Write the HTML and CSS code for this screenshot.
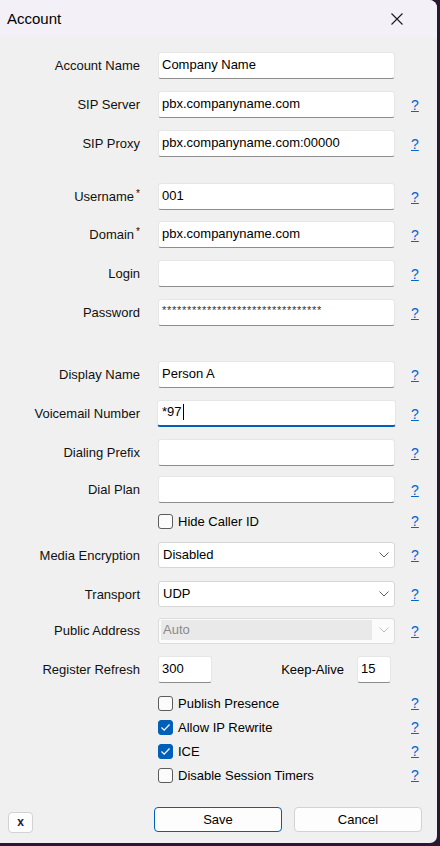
FILE: index.html
```html
<!DOCTYPE html>
<html>
<head>
<meta charset="utf-8">
<link rel="stylesheet" href="styles.css">
</head>
<body>
<div class="window">
  <div class="titlebar">
    <span class="title">Account</span>
    <svg class="close" width="12" height="12" viewBox="0 0 12 12"><path d="M0.5 0.5L11.5 11.5M11.5 0.5L0.5 11.5" stroke="#1a1a1a" stroke-width="1.1" fill="none"/></svg>
  </div>
  <div class="form">
    <div class="row first"><span class="label">Account Name</span><div class="input">Company Name</div><span></span></div>
    <div class="row"><span class="label">SIP Server</span><div class="input">pbx.companyname.com</div><a class="help">?</a></div>
    <div class="row"><span class="label">SIP Proxy</span><div class="input">pbx.companyname.com:00000</div><a class="help">?</a></div>

    <div class="row sec1"><span class="label">Username<sup>*</sup></span><div class="input">001</div><a class="help">?</a></div>
    <div class="row tight"><span class="label">Domain<sup>*</sup></span><div class="input">pbx.companyname.com</div><a class="help">?</a></div>
    <div class="row"><span class="label">Login</span><div class="input"></div><a class="help">?</a></div>
    <div class="row"><span class="label">Password</span><div class="input pw">********************************</div><a class="help">?</a></div>

    <div class="row sec2"><span class="label">Display Name</span><div class="input">Person A</div><a class="help">?</a></div>
    <div class="row"><span class="label">Voicemail Number</span><div class="input focused">*97<span class="caret"></span></div><a class="help">?</a></div>
    <div class="row"><span class="label">Dialing Prefix</span><div class="input"></div><a class="help">?</a></div>
    <div class="row tight2"><span class="label">Dial Plan</span><div class="input"></div><a class="help">?</a></div>

    <div class="row check cb-first"><span></span><label class="cb"><span class="box"></span>Hide Caller ID</label><a class="help">?</a></div>

    <div class="row sel-first"><span class="label">Media Encryption</span><div class="select"><span>Disabled</span><svg class="chev" width="10" height="6" viewBox="0 0 10 6"><path d="M0.5 0.5L5 5L9.5 0.5" stroke="#606060" stroke-width="1" fill="none"/></svg></div><a class="help">?</a></div>
    <div class="row"><span class="label">Transport</span><div class="select"><span>UDP</span><svg class="chev" width="10" height="6" viewBox="0 0 10 6"><path d="M0.5 0.5L5 5L9.5 0.5" stroke="#606060" stroke-width="1" fill="none"/></svg></div><a class="help">?</a></div>
    <div class="row tight2"><span class="label">Public Address</span><div class="select disabled"><span class="dis-inner">Auto</span><svg class="chev" width="10" height="6" viewBox="0 0 10 6"><path d="M0.5 0.5L5 5L9.5 0.5" stroke="#c0c0c0" stroke-width="1" fill="none"/></svg></div><a class="help">?</a></div>

    <div class="row"><span class="label">Register Refresh</span>
      <div class="pair">
        <div class="input small">300</div>
        <span class="ka-label">Keep-Alive</span>
        <div class="input tiny">15</div>
      </div><span></span></div>

    <div class="row check cb-after"><span></span><label class="cb"><span class="box"></span>Publish Presence</label><a class="help">?</a></div>
    <div class="row check"><span></span><label class="cb"><span class="box checked"><svg width="11" height="9" viewBox="0 0 11 9"><path d="M1.5 4.5L4.2 7.2L9.5 1.5" stroke="#fff" stroke-width="1.2" fill="none"/></svg></span>Allow IP Rewrite</label><a class="help">?</a></div>
    <div class="row check"><span></span><label class="cb"><span class="box checked"><svg width="11" height="9" viewBox="0 0 11 9"><path d="M1.5 4.5L4.2 7.2L9.5 1.5" stroke="#fff" stroke-width="1.2" fill="none"/></svg></span>ICE</label><a class="help">?</a></div>
    <div class="row check"><span></span><label class="cb"><span class="box"></span>Disable Session Timers</label><a class="help">?</a></div>
  </div>
  <div class="footer">
    <button class="xbtn">x</button>
    <button class="btn primary">Save</button>
    <button class="btn">Cancel</button>
  </div>
</div>
</body>
</html>
```

FILE: styles.css
```css
html, body {
  margin: 0;
  padding: 0;
}
body {
  background: #2a1830;
  font-family: "Liberation Sans", Arial, sans-serif;
  font-size: 13px;
  color: #000;
  width: 440px;
  height: 846px;
  overflow: hidden;
}
.window {
  width: 437px;
  height: 843px;
  background: #f0f0f0;
  border-radius: 0 8px 7px 0;
  overflow: hidden;
  display: flex;
  flex-direction: column;
}
.titlebar {
  height: 37px;
  flex: none;
  background: #f3f1f7;
  display: flex;
  align-items: center;
  justify-content: space-between;
  padding: 0 34px 0 7px;
}
.title {
  font-size: 15px;
  color: #000;
  margin-top: -1px;
}
.close {
  display: block;
}
.form {
  padding-top: 15px;
}
.row {
  display: grid;
  grid-template-columns: 142px 237px 1fr;
  column-gap: 16px;
  align-items: center;
  height: 27px;
  margin-top: 12px;
}
.row.first { margin-top: 0; }
.row.sec1 { margin-top: 26px; }
.row.tight { margin-top: 11px; }
.row.sec2 { margin-top: 35px; }
.row.tight2 { margin-top: 10px; }
.label {
  text-align: right;
  padding-right: 2px;
  white-space: nowrap;
  color: #111;
}
.label sup {
  font-size: 10px;
  vertical-align: 0;
  position: relative;
  top: -4px;
  margin-left: 2px;
}
.help {
  color: #0066cc;
  text-decoration: underline;
  font-size: 14px;
  line-height: 16px;
  cursor: pointer;
}
.input {
  box-sizing: border-box;
  height: 27px;
  background: #fff;
  border: 1px solid #e6e6e6;
  border-bottom: 1px solid #8d8d8d;
  border-radius: 3px;
  padding: 0 3px 3px;
  display: flex;
  align-items: center;
  white-space: nowrap;
  overflow: hidden;
}
.input.pw {
  align-items: flex-start;
  padding-top: 4px;
  font-size: 11px;
  letter-spacing: 0.72px;
  color: #333;
}
.input.focused {
  border-bottom: 2px solid #005fb8;
  margin: 0 -1px;
  padding-left: 4px;
}
.caret {
  display: inline-block;
  width: 1px;
  height: 16px;
  background: #000;
  margin-left: 1px;
}
.pair {
  display: flex;
  align-items: center;
  height: 27px;
}
.input.small { width: 54px; }
.input.tiny { width: 34px; margin-right: 4px; }
.ka-label {
  margin-left: auto;
  margin-right: 13px;
}
.select {
  box-sizing: border-box;
  height: 26px;
  background: #fff;
  border: 1px solid #d6d6d6;
  border-radius: 3px;
  display: flex;
  align-items: center;
  justify-content: space-between;
  padding: 0 5px 1px 4px;
}
.row.sel-first { margin-top: 13px; height: 26px; }
.select.disabled {
  background: #fbfbfb;
  border-color: #dcdcdc;
  padding-left: 2px;
  color: #8a8a8a;
}
.dis-inner {
  background: #e9e9e9;
  width: 211px;
  height: 20px;
  line-height: 19px;
  padding-left: 2px;
  box-sizing: border-box;
}
.chev { display: block; margin-right: 0; }
.row.check {
  height: 16px;
  margin-top: 8px;
}
.row.cb-first { margin-top: 10px; }
.row.cb-after { margin-top: 12px; }
.row.sel-first + .row { height: 26px; margin-top: 13px; }
.cb {
  display: flex;
  align-items: center;
  font-size: 13px;
  white-space: nowrap;
}
.box {
  box-sizing: border-box;
  width: 15px;
  height: 15px;
  border: 1px solid #5c5c5c;
  border-radius: 3px;
  background: #fbfbfb;
  margin-right: 5px;
  display: flex;
  align-items: center;
  justify-content: center;
}
.box.checked {
  background: #005fb8;
  border-color: #005fb8;
}
.box svg { display: block; }
.footer {
  display: flex;
  align-items: flex-start;
  padding: 0 0 0 8px;
  margin-top: 24px;
}
button {
  font-family: "Liberation Sans", Arial, sans-serif;
  font-size: 13px;
  color: #000;
  background: #fdfdfd;
  border: 1px solid #d2d2d2;
  border-radius: 4px;
  padding: 0;
  cursor: pointer;
}
.xbtn {
  width: 25px;
  height: 21px;
  margin-top: 5px;
  font-size: 12px;
  font-weight: bold;
  color: #202040;
  line-height: 17px;
}
.btn {
  width: 128px;
  height: 25px;
}
.btn.primary {
  margin-left: 121px;
  border: 1px solid #005fb8;
}
.btn + .btn {
  margin-left: 12px;
}
```
